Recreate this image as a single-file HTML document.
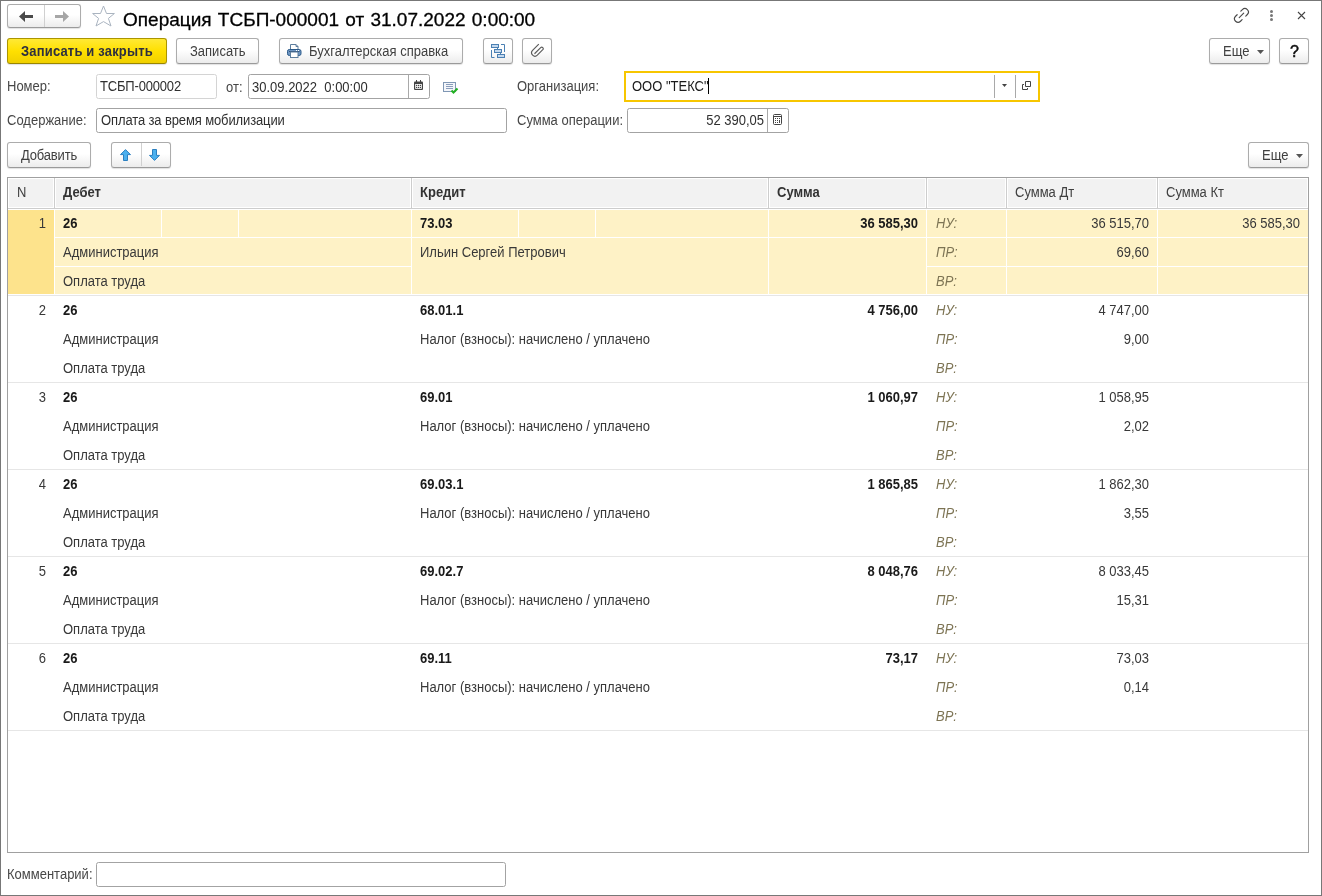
<!DOCTYPE html>
<html><head><meta charset="utf-8"><style>
*{box-sizing:border-box}
html,body{margin:0;padding:0}
body{width:1322px;height:896px;overflow:hidden;background:#fff;font-family:"Liberation Sans",sans-serif;font-size:13px;color:#4d4d4d;position:relative}
#root{position:absolute;left:0;top:0;width:1322px;height:896px;will-change:transform}
.a{position:absolute}
.btn{position:absolute;border:1px solid #acacac;border-bottom-color:#9a9a9a;border-radius:3px;background:linear-gradient(#fff 45%,#ececec);box-shadow:0 1px 1px rgba(0,0,0,.12)}
.ybtn{border-color:#ab9500;border-bottom-color:#9a8600;background:linear-gradient(#ffe935,#ffe000 50%,#f0d000)}
.inp{position:absolute;border:1px solid #a3a3a3;border-radius:2.5px;background:#fff}
.t{position:absolute;white-space:nowrap;line-height:16px;color:#333;transform:scaleY(1.08);transform-origin:0 12.5px}
.lbl{color:#474747}
.in{color:#303030}
.b{font-weight:bold}
.it{font-style:italic;color:#7d7454}
</style></head><body>
<div id="root">
<div class="a" style="left:0px;top:0px;width:1322px;height:896px;border:1px solid #777"></div>
<div class="btn " style="left:7px;top:4px;width:74px;height:24px"></div>
<div class="a" style="left:44px;top:5px;width:1px;height:22px;background:#d0d0d0"></div>
<svg class="a" style="left:19px;top:11px" width="15" height="12" viewBox="0 0 15 12"><path d="M0 5.5 L6 0 V4 H14 V7 H6 V11 Z" fill="#4a4a4a"/></svg>
<svg class="a" style="left:54px;top:11px" width="15" height="12" viewBox="0 0 15 12"><path d="M15 5.5 L9 0 V4 H1 V7 H9 V11 Z" fill="#a6a6a6"/></svg>
<svg class="a" style="left:92px;top:5px" width="24" height="23" viewBox="0 0 24 23"><path d="M11.5 1 L14.5 8.5 L22.4 8.5 L16.4 13.4 L19 21 L11.5 16.6 L4 21 L6.6 13.4 L0.6 8.5 L8.5 8.5 Z" fill="none" stroke="#aab4c0" stroke-width="1"/></svg>
<div class="a" style="left:123px;top:9px;font-size:19px;line-height:22px;color:#000;word-spacing:1px;white-space:nowrap;-webkit-text-stroke:0.3px #000">Операция ТСБП-000001 от 31.07.2022 0:00:00</div>
<svg class="a" style="left:1233px;top:7px" width="17" height="17" viewBox="0 0 17 17"><g fill="none" stroke="#4a4a4a" stroke-width="1.15" stroke-linecap="round"><path d="M7.82 4.13 L9.375 2.575 A3.5 3.5 0 0 1 14.325 7.525 L12.77 9.08"/><path d="M4.13 7.72 L2.575 9.275 A3.5 3.5 0 0 0 7.525 14.225 L9.08 12.67"/><path d="M6.2 10.6 L10.7 6.1"/></g></svg>
<div class="a" style="left:1270px;top:10px;width:3px;height:3px;border-radius:50%;background:#777"></div>
<div class="a" style="left:1270px;top:14px;width:3px;height:3px;border-radius:50%;background:#777"></div>
<div class="a" style="left:1270px;top:18px;width:3px;height:3px;border-radius:50%;background:#777"></div>
<svg class="a" style="left:1297px;top:11px" width="9" height="9" viewBox="0 0 9 9"><path d="M1 1 L8 8 M8 1 L1 8" stroke="#444" stroke-width="1.1"/></svg>
<div class="btn ybtn" style="left:7px;top:38px;width:160px;height:26px"></div>
<div class="t b" style="left:21px;top:44px;color:#2e3040;letter-spacing:0.17px">Записать и закрыть</div>
<div class="btn " style="left:176px;top:38px;width:83px;height:26px"></div>
<div class="t " style="left:190px;top:44px;color:#404040">Записать</div>
<div class="btn " style="left:279px;top:38px;width:184px;height:26px"></div>
<div class="t " style="left:309px;top:44px;color:#404040">Бухгалтерская справка</div>
<svg class="a" style="left:287px;top:43px" width="15" height="15" viewBox="0 0 15 15"><path d="M3.5 1.5 H9 L11 3.5 V7 H3.5 Z" fill="#fff" stroke="#5d7d9d" stroke-width="1"/><path d="M9 1.5 V3.5 H11" fill="none" stroke="#5d7d9d" stroke-width="1"/><rect x="0.5" y="6.5" width="13.5" height="6" rx="1.8" fill="#6f97c3" stroke="#2b5a8a" stroke-width="1"/><path d="M2 8.5 H12.5" stroke="#2b4f78" stroke-width="1"/><rect x="9" y="7" width="1" height="1" fill="#fff"/><rect x="11" y="7" width="1" height="1" fill="#fff"/><rect x="3.5" y="9" width="7.5" height="5.5" fill="#fff" stroke="#5d7d9d" stroke-width="1"/></svg>
<div class="btn " style="left:483px;top:38px;width:30px;height:26px"></div>
<svg class="a" style="left:491px;top:44px" width="14" height="14" viewBox="0 0 14 14"><g fill="#c5d9ee" stroke="#4b80b3" stroke-width="1"><rect x="0.5" y="0.5" width="7" height="3"/><rect x="3.5" y="5.5" width="7" height="3"/><rect x="6.5" y="10.5" width="7" height="3"/></g><path d="M0.5 6 V13.5 H3.5 M10 0.5 H13.5 V8 M6.5 4 V5 M9.5 9 V10" fill="none" stroke="#4b80b3" stroke-width="1"/></svg>
<div class="btn " style="left:522px;top:38px;width:30px;height:26px"></div>
<svg class="a" style="left:530px;top:43px" width="15" height="15" viewBox="0 0 15 15"><path d="M8.8 1.2 L2.58 7.42 A3.36 3.36 0 0 0 7.33 12.17 L12.79 6.71 A1.5 1.5 0 0 0 10.67 4.59 L4.5 10.76" fill="none" stroke="#5a5a5a" stroke-width="1.15"/></svg>
<div class="btn " style="left:1209px;top:38px;width:61px;height:26px"></div>
<div class="t " style="left:1223px;top:44px;color:#404040">Еще</div>
<svg class="a" style="left:1257px;top:50px" width="7" height="4" viewBox="0 0 7 4"><path d="M0 0 H7 L3.5 4 Z" fill="#555"/></svg>
<div class="btn " style="left:1279px;top:38px;width:30px;height:26px"></div>
<div class="a" style="left:1279px;top:39px;width:30px;text-align:center;font-size:16px;line-height:25px;color:#111;-webkit-text-stroke:0.5px #111;padding-left:1px">?</div>
<div class="t lbl" style="left:7px;top:79px;">Номер:</div>
<div class="inp" style="left:96px;top:74px;width:121px;height:25px;border-color:#d4d4d4"></div>
<div class="t in" style="left:100px;top:79px;letter-spacing:-0.18px">ТСБП-000002</div>
<div class="t lbl" style="left:226px;top:80px;">от:</div>
<div class="inp" style="left:248px;top:74px;width:182px;height:25px;"></div>
<div class="t in" style="left:252px;top:80px;">30.09.2022&nbsp; 0:00:00</div>
<div class="a" style="left:408px;top:75px;width:1px;height:23px;background:#a9a9a9"></div>
<svg class="a" style="left:414px;top:80px" width="9" height="10" viewBox="0 0 9 10"><rect x="0" y="1.5" width="9" height="8.5" rx="1" fill="#444"/><rect x="1.2" y="4" width="6.6" height="4.8" fill="#fff"/><g fill="#444"><rect x="2" y="4.8" width="1.2" height="1.2"/><rect x="3.9" y="4.8" width="1.2" height="1.2"/><rect x="5.8" y="4.8" width="1.2" height="1.2"/><rect x="2" y="6.8" width="1.2" height="1.2"/><rect x="3.9" y="6.8" width="1.2" height="1.2"/><rect x="5.8" y="6.8" width="1.2" height="1.2"/><rect x="2" y="0" width="1" height="2"/><rect x="6" y="0" width="1" height="2"/></g></svg>
<svg class="a" style="left:443px;top:82px" width="16" height="12" viewBox="0 0 16 12"><rect x="0.5" y="0.5" width="12" height="9" fill="#f4f6fa" stroke="#8097b4"/><path d="M3 2.5 H10 M3 4.5 H10 M3 6.5 H10" stroke="#8a9dbb" stroke-width="1"/><path d="M8.5 8.5 L10.5 10.5 L14.5 6.5" fill="none" stroke="#22b022" stroke-width="2"/></svg>
<div class="t lbl" style="left:517px;top:79px;">Организация:</div>
<div class="a" style="left:624px;top:71px;width:416px;height:31px;border:2px solid #f7c600;background:#fff"></div>
<div class="t in" style="left:632px;top:79px;color:#1a1a1a">ООО "ТЕКС"</div>
<div class="a" style="left:708px;top:78px;width:1px;height:16px;background:#000"></div>
<div class="a" style="left:994px;top:75px;width:1px;height:23px;background:#a9a9a9"></div>
<svg class="a" style="left:1002px;top:84px" width="5" height="3" viewBox="0 0 5 3"><path d="M0 0 H5 L2.5 3 Z" fill="#444"/></svg>
<div class="a" style="left:1015px;top:75px;width:1px;height:23px;background:#a9a9a9"></div>
<svg class="a" style="left:1022px;top:81px" width="10" height="10" viewBox="0 0 10 10"><path d="M3.5 0.5 H8.5 V5.5 H3.5 Z" fill="none" stroke="#444"/><path d="M2 3.5 H0.5 V8.5 H5.5 V7" fill="none" stroke="#444"/></svg>
<div class="t lbl" style="left:7px;top:113px;">Содержание:</div>
<div class="inp" style="left:96px;top:108px;width:411px;height:25px;"></div>
<div class="t in" style="left:101px;top:113px;letter-spacing:-0.12px">Оплата за время мобилизации</div>
<div class="t lbl" style="left:517px;top:113px;">Сумма операции:</div>
<div class="inp" style="left:627px;top:108px;width:162px;height:25px;"></div>
<div class="t in" style="right:558px;top:113px;text-align:right;">52 390,05</div>
<div class="a" style="left:767px;top:109px;width:1px;height:23px;background:#a9a9a9"></div>
<svg class="a" style="left:773px;top:114px" width="9" height="11" viewBox="0 0 9 11"><rect x="0.5" y="0.5" width="8" height="10" rx="1" fill="none" stroke="#444"/><path d="M1 2.5 H8" stroke="#444"/><g fill="#444"><rect x="2" y="4" width="1" height="1"/><rect x="4" y="4" width="1" height="1"/><rect x="6" y="4" width="1" height="1"/><rect x="2" y="6" width="1" height="1"/><rect x="4" y="6" width="1" height="1"/><rect x="2" y="8" width="1" height="1"/><rect x="4" y="8" width="1" height="1"/><rect x="6" y="6" width="1" height="3"/></g></svg>
<div class="btn " style="left:7px;top:142px;width:84px;height:26px"></div>
<div class="t " style="left:21px;top:148px;color:#404040;letter-spacing:-0.18px">Добавить</div>
<div class="btn " style="left:111px;top:142px;width:60px;height:26px"></div>
<div class="a" style="left:141px;top:143px;width:1px;height:23px;background:#d0d0d0"></div>
<svg class="a" style="left:120px;top:149px" width="11" height="12" viewBox="0 0 11 12"><path d="M5.5 0.6 L10.5 5.6 H7.5 V11.5 H3.5 V5.6 H0.5 Z" fill="#4bb0ee" stroke="#2b7fc0" stroke-width="1" stroke-linejoin="miter"/></svg>
<svg class="a" style="left:149px;top:149px" width="11" height="12" viewBox="0 0 11 12"><path d="M5.5 11.4 L10.5 6.4 H7.5 V0.5 H3.5 V6.4 H0.5 Z" fill="#4bb0ee" stroke="#2b7fc0" stroke-width="1" stroke-linejoin="miter"/></svg>
<div class="btn " style="left:1248px;top:142px;width:61px;height:26px"></div>
<div class="t " style="left:1262px;top:148px;color:#404040">Еще</div>
<svg class="a" style="left:1296px;top:154px" width="7" height="4" viewBox="0 0 7 4"><path d="M0 0 H7 L3.5 4 Z" fill="#555"/></svg>
<div class="a" style="left:7px;top:177px;width:1302px;height:676px;border:1px solid #a0a0a0;background:#fff"></div>
<div class="a" style="left:8px;top:178px;width:1300px;height:30px;background:#fff"></div>
<div class="a" style="left:9px;top:179px;width:44px;height:28px;background:#f2f2f2"></div>
<div class="a" style="left:56px;top:179px;width:354px;height:28px;background:#f2f2f2"></div>
<div class="a" style="left:413px;top:179px;width:354px;height:28px;background:#f2f2f2"></div>
<div class="a" style="left:770px;top:179px;width:155px;height:28px;background:#f2f2f2"></div>
<div class="a" style="left:928px;top:179px;width:77px;height:28px;background:#f2f2f2"></div>
<div class="a" style="left:1008px;top:179px;width:148px;height:28px;background:#f2f2f2"></div>
<div class="a" style="left:1159px;top:179px;width:148px;height:28px;background:#f2f2f2"></div>
<div class="a" style="left:54px;top:178px;width:1px;height:31px;background:#cdcdcd"></div>
<div class="a" style="left:411px;top:178px;width:1px;height:31px;background:#cdcdcd"></div>
<div class="a" style="left:768px;top:178px;width:1px;height:31px;background:#cdcdcd"></div>
<div class="a" style="left:926px;top:178px;width:1px;height:31px;background:#cdcdcd"></div>
<div class="a" style="left:1006px;top:178px;width:1px;height:31px;background:#cdcdcd"></div>
<div class="a" style="left:1157px;top:178px;width:1px;height:31px;background:#cdcdcd"></div>
<div class="a" style="left:8px;top:208px;width:1300px;height:1px;background:#cdcdcd"></div>
<div class="t " style="left:17px;top:185px;color:#404040">N</div>
<div class="t b" style="left:63px;top:185px;color:#333">Дебет</div>
<div class="t b" style="left:420px;top:185px;color:#333">Кредит</div>
<div class="t b" style="left:777px;top:185px;color:#333">Сумма</div>
<div class="t " style="left:1015px;top:185px;color:#404040">Сумма Дт</div>
<div class="t " style="left:1166px;top:185px;color:#404040">Сумма Кт</div>
<div class="a" style="left:8px;top:209px;width:1300px;height:86px;background:#fff"></div>
<div class="a" style="left:8px;top:210px;width:46px;height:84px;background:#fde38c"></div>
<div class="a" style="left:55px;top:210px;width:1253px;height:84px;background:#fef2c6"></div>
<div class="a" style="left:54px;top:209px;width:1px;height:86px;background:#fff"></div>
<div class="a" style="left:411px;top:209px;width:1px;height:86px;background:#fff"></div>
<div class="a" style="left:768px;top:209px;width:1px;height:86px;background:#fff"></div>
<div class="a" style="left:926px;top:209px;width:1px;height:86px;background:#fff"></div>
<div class="a" style="left:1006px;top:209px;width:1px;height:86px;background:#fff"></div>
<div class="a" style="left:1157px;top:209px;width:1px;height:86px;background:#fff"></div>
<div class="a" style="left:55px;top:237px;width:356px;height:1px;background:#fff"></div>
<div class="a" style="left:55px;top:266px;width:356px;height:1px;background:#fff"></div>
<div class="a" style="left:161px;top:209px;width:1px;height:28px;background:#fff"></div>
<div class="a" style="left:238px;top:209px;width:1px;height:28px;background:#fff"></div>
<div class="a" style="left:412px;top:237px;width:356px;height:1px;background:#fff"></div>
<div class="a" style="left:518px;top:209px;width:1px;height:28px;background:#fff"></div>
<div class="a" style="left:595px;top:209px;width:1px;height:28px;background:#fff"></div>
<div class="a" style="left:769px;top:237px;width:157px;height:1px;background:#fff"></div>
<div class="a" style="left:927px;top:237px;width:381px;height:1px;background:#fff"></div>
<div class="a" style="left:927px;top:266px;width:381px;height:1px;background:#fff"></div>
<div class="a" style="left:8px;top:295px;width:1300px;height:1px;background:#e6e6e6"></div>
<div class="t " style="right:1276px;top:216px;text-align:right;color:#383838">1</div>
<div class="t b" style="left:63px;top:216px;color:#1a1a1a">26</div>
<div class="t " style="left:63px;top:245px;color:#383838">Администрация</div>
<div class="t " style="left:63px;top:274px;color:#383838">Оплата труда</div>
<div class="t b" style="left:420px;top:216px;color:#1a1a1a">73.03</div>
<div class="t " style="left:420px;top:245px;color:#383838">Ильин Сергей Петрович</div>
<div class="t b" style="right:404px;top:216px;text-align:right;color:#1a1a1a">36 585,30</div>
<div class="t it" style="left:936px;top:216px;">НУ:</div>
<div class="t it" style="left:936px;top:245px;">ПР:</div>
<div class="t it" style="left:936px;top:274px;">ВР:</div>
<div class="t " style="right:173px;top:216px;text-align:right;color:#383838">36 515,70</div>
<div class="t " style="right:173px;top:245px;text-align:right;color:#383838">69,60</div>
<div class="t " style="right:22px;top:216px;text-align:right;color:#383838">36 585,30</div>
<div class="a" style="left:8px;top:382px;width:1300px;height:1px;background:#e6e6e6"></div>
<div class="t " style="right:1276px;top:303px;text-align:right;color:#383838">2</div>
<div class="t b" style="left:63px;top:303px;color:#1a1a1a">26</div>
<div class="t " style="left:63px;top:332px;color:#383838">Администрация</div>
<div class="t " style="left:63px;top:361px;color:#383838">Оплата труда</div>
<div class="t b" style="left:420px;top:303px;color:#1a1a1a">68.01.1</div>
<div class="t " style="left:420px;top:332px;color:#383838">Налог (взносы): начислено / уплачено</div>
<div class="t b" style="right:404px;top:303px;text-align:right;color:#1a1a1a">4 756,00</div>
<div class="t it" style="left:936px;top:303px;">НУ:</div>
<div class="t it" style="left:936px;top:332px;">ПР:</div>
<div class="t it" style="left:936px;top:361px;">ВР:</div>
<div class="t " style="right:173px;top:303px;text-align:right;color:#383838">4 747,00</div>
<div class="t " style="right:173px;top:332px;text-align:right;color:#383838">9,00</div>
<div class="a" style="left:8px;top:469px;width:1300px;height:1px;background:#e6e6e6"></div>
<div class="t " style="right:1276px;top:390px;text-align:right;color:#383838">3</div>
<div class="t b" style="left:63px;top:390px;color:#1a1a1a">26</div>
<div class="t " style="left:63px;top:419px;color:#383838">Администрация</div>
<div class="t " style="left:63px;top:448px;color:#383838">Оплата труда</div>
<div class="t b" style="left:420px;top:390px;color:#1a1a1a">69.01</div>
<div class="t " style="left:420px;top:419px;color:#383838">Налог (взносы): начислено / уплачено</div>
<div class="t b" style="right:404px;top:390px;text-align:right;color:#1a1a1a">1 060,97</div>
<div class="t it" style="left:936px;top:390px;">НУ:</div>
<div class="t it" style="left:936px;top:419px;">ПР:</div>
<div class="t it" style="left:936px;top:448px;">ВР:</div>
<div class="t " style="right:173px;top:390px;text-align:right;color:#383838">1 058,95</div>
<div class="t " style="right:173px;top:419px;text-align:right;color:#383838">2,02</div>
<div class="a" style="left:8px;top:556px;width:1300px;height:1px;background:#e6e6e6"></div>
<div class="t " style="right:1276px;top:477px;text-align:right;color:#383838">4</div>
<div class="t b" style="left:63px;top:477px;color:#1a1a1a">26</div>
<div class="t " style="left:63px;top:506px;color:#383838">Администрация</div>
<div class="t " style="left:63px;top:535px;color:#383838">Оплата труда</div>
<div class="t b" style="left:420px;top:477px;color:#1a1a1a">69.03.1</div>
<div class="t " style="left:420px;top:506px;color:#383838">Налог (взносы): начислено / уплачено</div>
<div class="t b" style="right:404px;top:477px;text-align:right;color:#1a1a1a">1 865,85</div>
<div class="t it" style="left:936px;top:477px;">НУ:</div>
<div class="t it" style="left:936px;top:506px;">ПР:</div>
<div class="t it" style="left:936px;top:535px;">ВР:</div>
<div class="t " style="right:173px;top:477px;text-align:right;color:#383838">1 862,30</div>
<div class="t " style="right:173px;top:506px;text-align:right;color:#383838">3,55</div>
<div class="a" style="left:8px;top:643px;width:1300px;height:1px;background:#e6e6e6"></div>
<div class="t " style="right:1276px;top:564px;text-align:right;color:#383838">5</div>
<div class="t b" style="left:63px;top:564px;color:#1a1a1a">26</div>
<div class="t " style="left:63px;top:593px;color:#383838">Администрация</div>
<div class="t " style="left:63px;top:622px;color:#383838">Оплата труда</div>
<div class="t b" style="left:420px;top:564px;color:#1a1a1a">69.02.7</div>
<div class="t " style="left:420px;top:593px;color:#383838">Налог (взносы): начислено / уплачено</div>
<div class="t b" style="right:404px;top:564px;text-align:right;color:#1a1a1a">8 048,76</div>
<div class="t it" style="left:936px;top:564px;">НУ:</div>
<div class="t it" style="left:936px;top:593px;">ПР:</div>
<div class="t it" style="left:936px;top:622px;">ВР:</div>
<div class="t " style="right:173px;top:564px;text-align:right;color:#383838">8 033,45</div>
<div class="t " style="right:173px;top:593px;text-align:right;color:#383838">15,31</div>
<div class="a" style="left:8px;top:730px;width:1300px;height:1px;background:#e6e6e6"></div>
<div class="t " style="right:1276px;top:651px;text-align:right;color:#383838">6</div>
<div class="t b" style="left:63px;top:651px;color:#1a1a1a">26</div>
<div class="t " style="left:63px;top:680px;color:#383838">Администрация</div>
<div class="t " style="left:63px;top:709px;color:#383838">Оплата труда</div>
<div class="t b" style="left:420px;top:651px;color:#1a1a1a">69.11</div>
<div class="t " style="left:420px;top:680px;color:#383838">Налог (взносы): начислено / уплачено</div>
<div class="t b" style="right:404px;top:651px;text-align:right;color:#1a1a1a">73,17</div>
<div class="t it" style="left:936px;top:651px;">НУ:</div>
<div class="t it" style="left:936px;top:680px;">ПР:</div>
<div class="t it" style="left:936px;top:709px;">ВР:</div>
<div class="t " style="right:173px;top:651px;text-align:right;color:#383838">73,03</div>
<div class="t " style="right:173px;top:680px;text-align:right;color:#383838">0,14</div>
<div class="t lbl" style="left:7px;top:867px;">Комментарий:</div>
<div class="inp" style="left:96px;top:862px;width:410px;height:25px;"></div>
</div>
</body></html>
